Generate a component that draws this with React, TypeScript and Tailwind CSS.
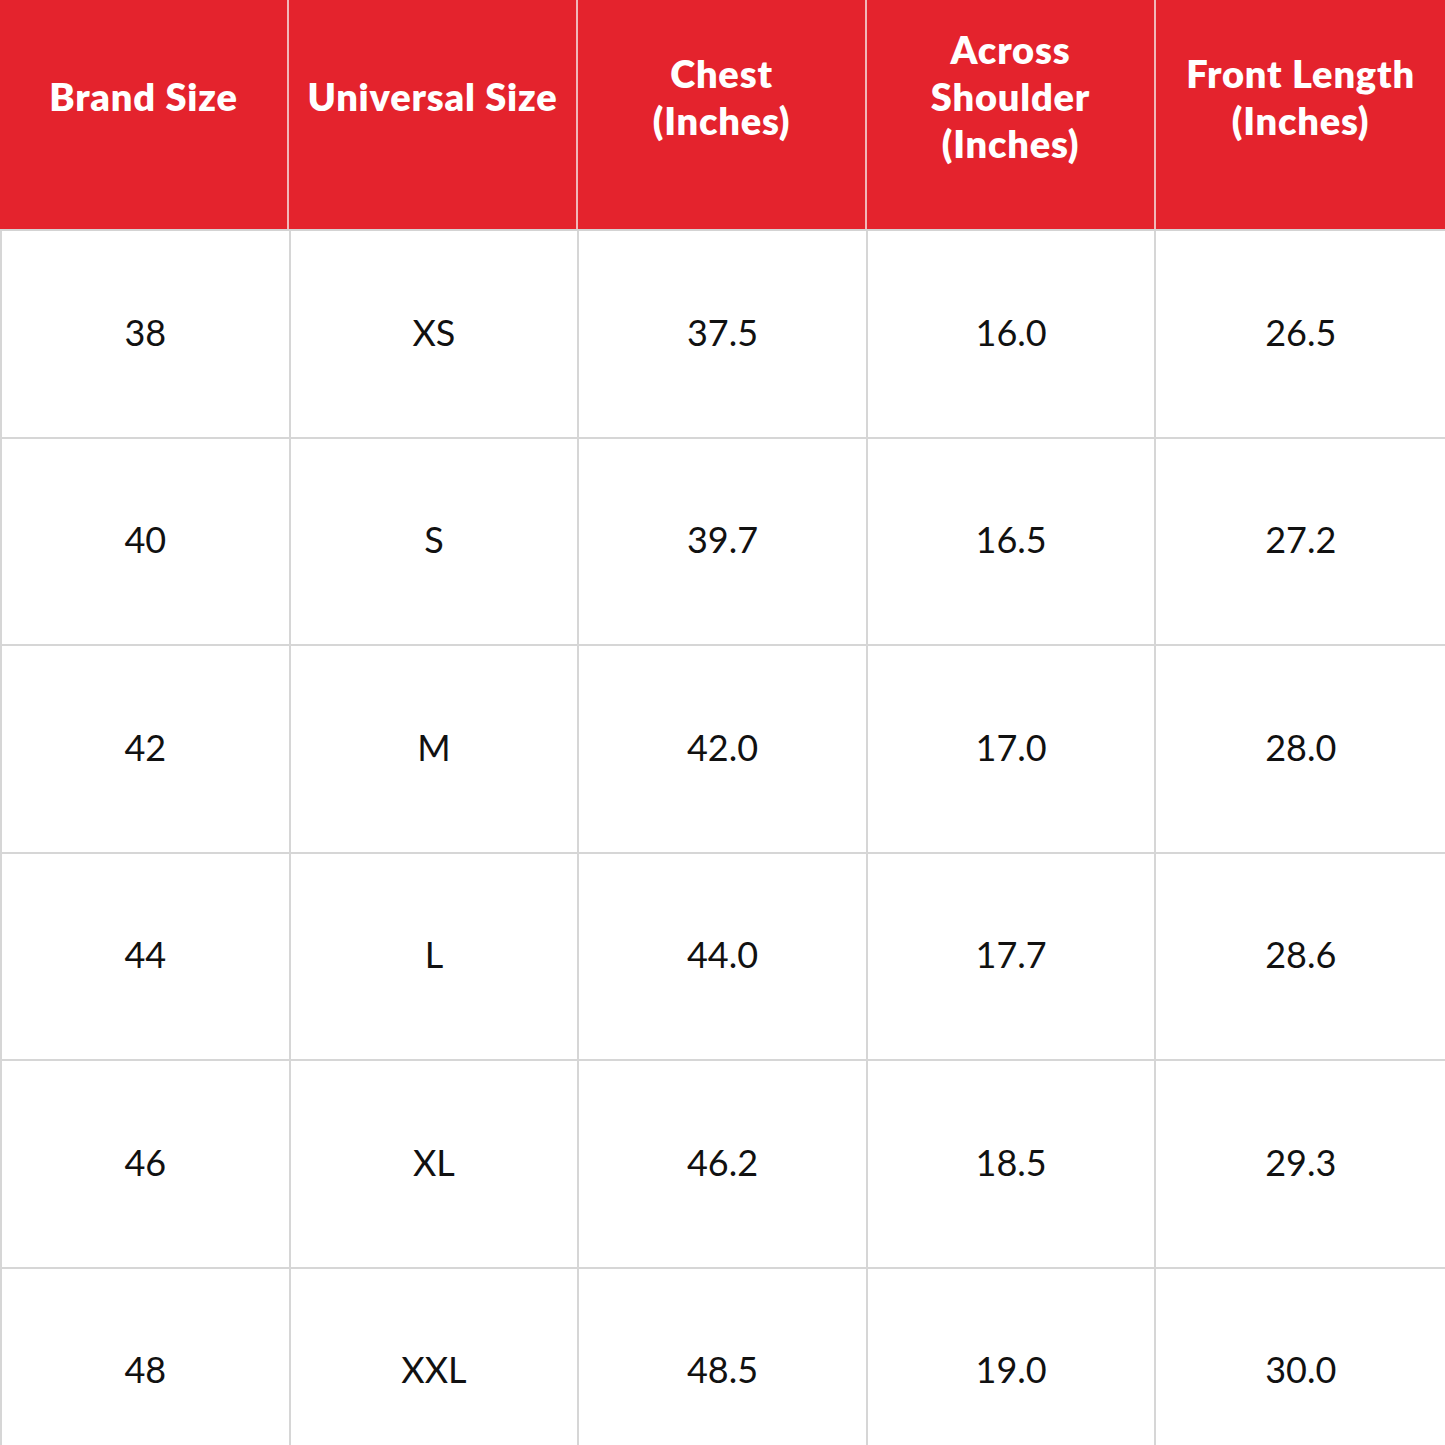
const HEADERS = [
  ["Brand Size"],
  ["Universal Size"],
  ["Chest", "(Inches)"],
  ["Across", "Shoulder", "(Inches)"],
  ["Front Length", "(Inches)"],
];

const ROWS = [
  ["38", "XS", "37.5", "16.0", "26.5"],
  ["40", "S", "39.7", "16.5", "27.2"],
  ["42", "M", "42.0", "17.0", "28.0"],
  ["44", "L", "44.0", "17.7", "28.6"],
  ["46", "XL", "46.2", "18.5", "29.3"],
  ["48", "XXL", "48.5", "19.0", "30.0"],
];

export default function App() {
  return (
    <div className="w-[1445px] h-[1445px] overflow-hidden bg-white font-['Lato',sans-serif]">
      {/* Header */}
      <div className="grid grid-cols-5 h-[231px] bg-[#e4232d] border-b-2 border-[#d3d3d3]">
        {HEADERS.map((lines, i) => (
          <div
            key={i}
            className={
              "flex flex-col items-center justify-center pb-[36px] text-white font-extrabold text-[38px] leading-[47px] tracking-[0.8px] " +
              (i < 4 ? "border-r-2 border-[#f1b7b9]" : "")
            }
          >
            {lines.map((l) => (
              <span key={l}>{l}</span>
            ))}
          </div>
        ))}
      </div>

      {/* Body */}
      {ROWS.map((row, r) => (
        <div
          key={r}
          className="grid grid-cols-5 h-[207.5px] border-b-2 border-[#d6d6d6] border-l-2"
        >
          {row.map((cell, c) => (
            <div
              key={c}
              className={
                "flex items-center justify-center pb-[4px] text-[36px] text-[#111] " +
                (c < 4 ? "border-r-2 border-[#d6d6d6]" : "")
              }
            >
              {cell}
            </div>
          ))}
        </div>
      ))}
    </div>
  );
}
